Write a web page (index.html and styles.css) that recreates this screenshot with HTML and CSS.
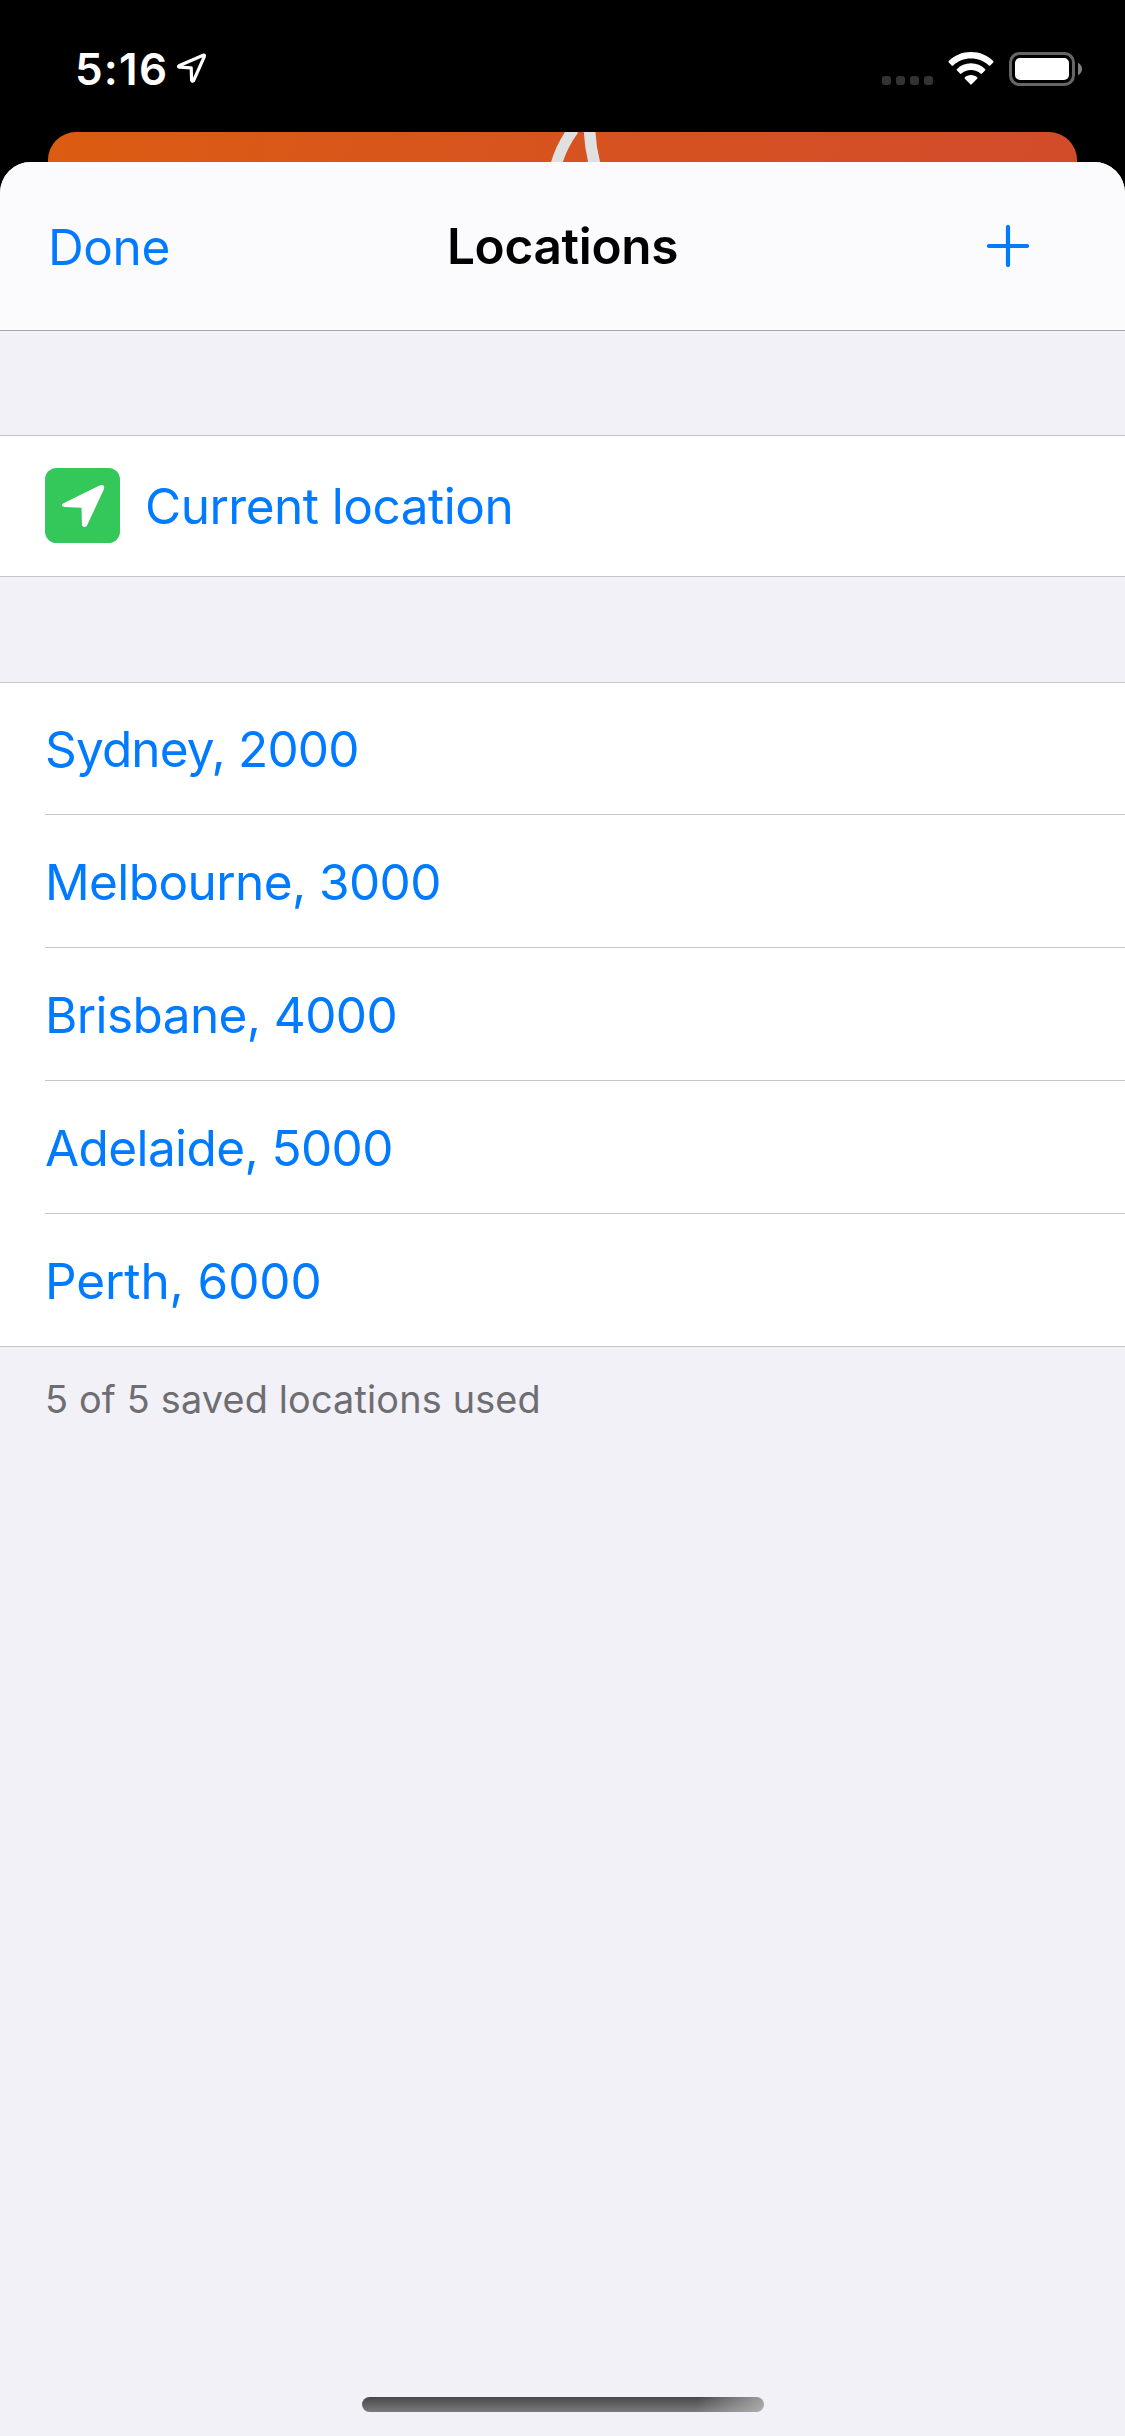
FILE: index.html
```html
<!DOCTYPE html>
<html lang="en">
<head>
<meta charset="utf-8">
<title>Locations</title>
<link rel="stylesheet" href="styles.css">
</head>
<body>
<div class="screen">
  <header class="status-bar">
    <div class="status-left">
      <span class="time">5:16</span>
      <svg class="status-arrow" width="32" height="32" viewBox="0 0 32 32"><path d="M3 12.8 27.2 2.2Q29 1.8 28.2 3.8L17.6 27.6Q16.2 29 15.6 27L15.2 14.8 3.4 14.2Q1.6 13.6 3 12.8Z" fill="none" stroke="#fff" stroke-width="3.2" stroke-linejoin="round"/></svg>
    </div>
    <div class="status-right">
      <div class="dots"><i></i><i></i><i></i><i></i></div>
      <svg class="wifi" width="46" height="34" viewBox="0 0 46 34" fill="#fff"><path d="M23 0C32 0 39.500 3.400 45.200 8.900Q46 9.700 45.200 10.500L42.300 13.500Q41.600 14.200 40.800 13.500C36 9.200 30 6.600 23 6.600S10 9.200 5.200 13.500Q4.400 14.200 3.700 13.500L.8 10.500Q0 9.700 .8 8.900C6.500 3.400 14 0 23 0Z"/><path d="M23 11.300C28.600 11.300 33.400 13.500 37 17Q37.800 17.800 37 18.600L34 21.600Q33.300 22.300 32.500 21.600C30 19.400 26.800 18 23 18S16 19.400 13.500 21.600Q12.700 22.300 12 21.600L9 18.600Q8.200 17.800 9 17C12.600 13.500 17.400 11.300 23 11.300Z"/><path d="M23 23C25.600 23 27.600 24 29.100 25.200Q29.900 26 29.100 26.800L23.700 32.300Q23 33 22.300 32.300L16.900 26.800Q16.100 26 16.900 25.200C18.400 24 20.400 23 23 23Z"/></svg>
      <svg class="battery" width="74" height="34" viewBox="0 0 74 34"><rect x="1.500" y="1.500" width="63" height="31" rx="9" fill="none" stroke="#666" stroke-width="3"/><rect x="6" y="6" width="54" height="22" rx="5" fill="#fff"/><path d="M69 10.800Q73 13 73 17T69 23.200Z" fill="#808080"/></svg>
    </div>
  </header>
  <div class="back-card">
    <svg width="56" height="30" viewBox="0 0 56 30" fill="none" stroke="#e0e0e0"><path d="M6.300 32Q11.500 14 23.500-2.500" stroke-width="11.200"/><path d="M39.500-3Q40 14 44.600 32" stroke-width="11.600"/></svg>
  </div>
  <main class="sheet">
    <nav class="nav">
      <a class="done">Done</a>
      <h1 class="title">Locations</h1>
      <a class="add"><svg width="42" height="42" viewBox="0 0 42 42"><path d="M21 2V40M2 21H40" stroke="#007aff" stroke-width="4.200" stroke-linecap="round"/></svg></a>
    </nav>
    <section class="group current">
      <div class="current-row">
        <svg class="tile" width="75" height="75" viewBox="0 0 75 75"><rect width="75" height="75" rx="11.500" fill="#34c85a"/><path d="M18.500 35.300 54.500 17.500Q60.500 15.500 58.800 21.500L42 57.500Q39.500 60.500 37 57.500L36.500 39.700 19.500 39Q14.500 38 18.500 35.300Z" fill="#fff"/></svg>
        <span class="current-label">Current location</span>
      </div>
    </section>
    <ul class="group saved">
      <li>Sydney, 2000</li>
      <li>Melbourne, 3000</li>
      <li>Brisbane, 4000</li>
      <li>Adelaide, 5000</li>
      <li>Perth, 6000</li>
    </ul>
    <p class="footnote">5 of 5 saved locations used</p>
    <div class="home-indicator"></div>
  </main>
</div>
</body>
</html>
```
FILE: styles.css
```css
* { box-sizing: border-box; }
body { margin: 0; font-family: Inter, "Liberation Sans", sans-serif; }
.screen { width: 1125px; height: 2436px; background: #000; display: flex; flex-direction: column; overflow: hidden; }

/* Status bar */
.status-bar { height: 132px; padding: 52px 42px 0 75px; display: flex; justify-content: space-between; align-items: flex-start; }
.status-left, .status-right { display: flex; align-items: flex-start; }
.time { color: #fff; font-size: 44px; font-weight: 600; line-height: 34px; letter-spacing: 1.2px; }
.status-arrow { margin: 1px 0 0 8px; }
.dots { display: flex; gap: 5px; margin: 24px 15px 0 0; }
.dots i { width: 9px; height: 9px; border-radius: 3px; background: #333; }
.battery { margin-left: 15px; }

/* Card peeking out behind the sheet */
.back-card { height: 30px; margin: 0 48px; padding-left: 502px; border-radius: 28px 28px 0 0; background: linear-gradient(100deg, #dc5c12, #d65220 55%, #d24c2b); display: flex; overflow: hidden; }

/* Sheet */
.sheet { flex: 1; background: #f2f1f7; border-radius: 31px 31px 0 0; overflow: hidden; display: flex; flex-direction: column; }
.nav { height: 169px; background: #fbfbfd; border-bottom: 1px solid #a7a7ab; display: grid; grid-template-columns: 1fr auto 1fr; align-items: center; padding: 0 48px; }
.done { margin-top: 2px; color: #007aff; font-size: 49.5px; letter-spacing: -0.4px; }
.title { margin: 0; font-size: 49.5px; font-weight: 600; letter-spacing: -0.3px; }
.add { justify-self: end; display: flex; margin-right: 48px; }

/* Grouped lists */
.group { margin: 0; padding: 0; list-style: none; color: #007aff; font-size: 49.5px; letter-spacing: -0.6px; background: #fff; border: solid #c6c6c8; border-width: 1px 0; }
.current { margin-top: 104px; height: 142px; }
.current-row { height: 140px; display: flex; align-items: center; padding-left: 45px; gap: 25px; }
.current-label { letter-spacing: -0.5px; }
.tile { margin-bottom: 1px; }
.saved { margin-top: 105px; }
.saved li { height: 133px; margin-left: 45px; border-bottom: 1px solid #c6c6c8; line-height: 134px; }
.saved li:first-child { height: 132px; line-height: 132px; letter-spacing: -0.85px; }
.saved li:last-child { height: 132px; border: 0; letter-spacing: -0.1px; }
.footnote { margin: 29px 0 0 45px; font-size: 37.8px; line-height: 46px; letter-spacing: 0.18px; color: #6d6d72; }
.home-indicator { width: 402px; height: 15px; margin: auto auto 24px 362px; border-radius: 8px; background: linear-gradient(100deg, transparent 83%, rgba(190, 190, 190, 0.75)), linear-gradient(#484849, #7b7b7d); }
```
